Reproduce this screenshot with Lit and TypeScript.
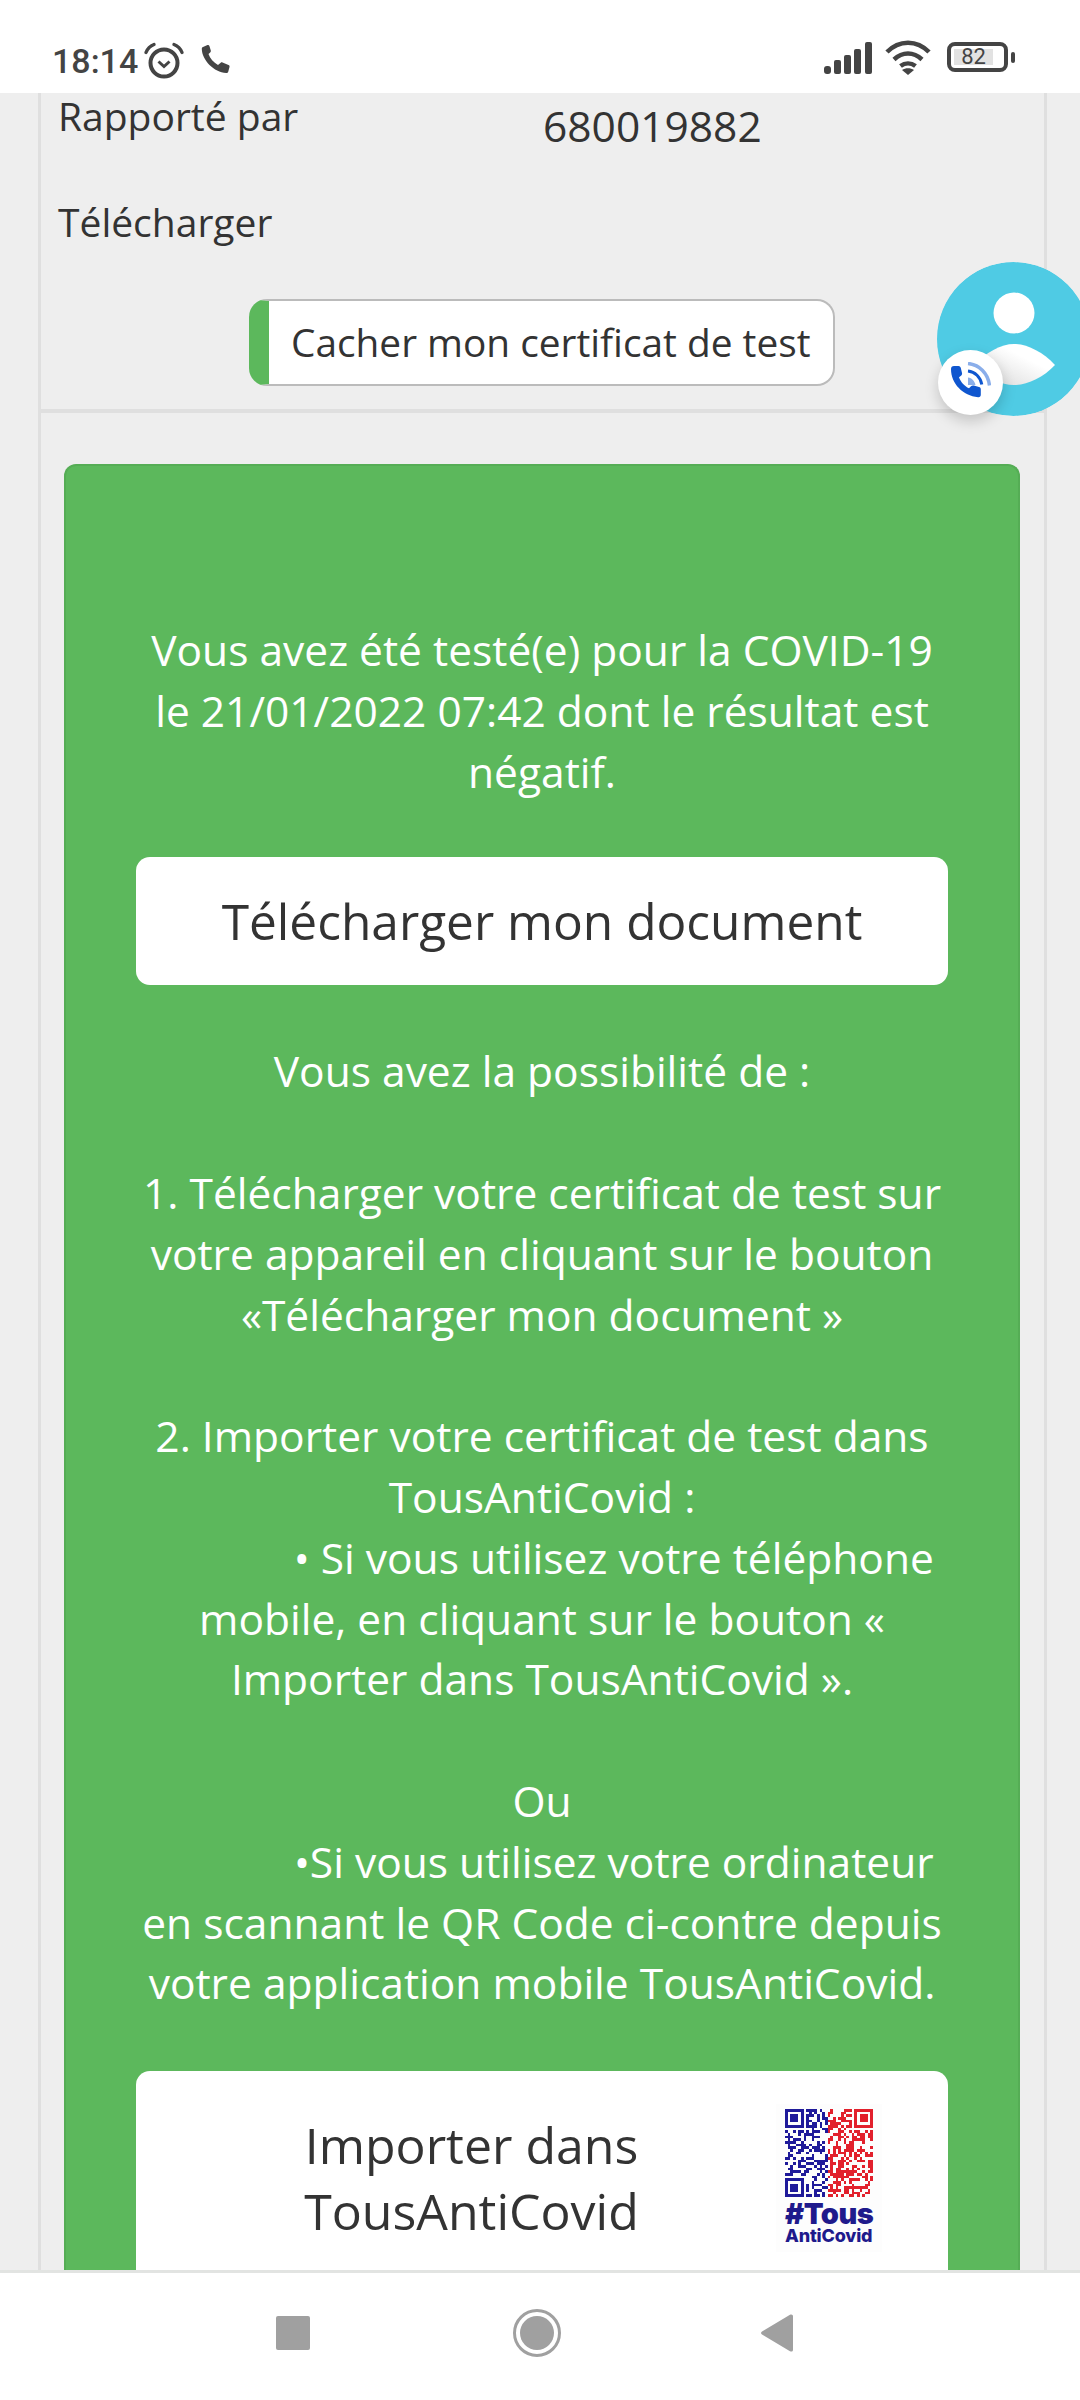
import { LitElement, css, html, svg } from 'lit';
import { customElement } from 'lit/decorators.js';

const sp = (n: number) => '\u00a0'.repeat(n);

const INTRO = [
	'Vous avez été testé(e) pour la COVID-19',
	'le 21/01/2022 07:42 dont le résultat est',
	'négatif.',
];

const STEPS = [
	'Vous avez la possibilité de :',
	'',
	'1. Télécharger votre certificat de test sur',
	'votre appareil en cliquant sur le bouton',
	'«Télécharger mon document »',
	'',
	'2. Importer votre certificat de test dans',
	'TousAntiCovid :',
	sp(13) + '• Si vous utilisez votre téléphone',
	'mobile, en cliquant sur le bouton «',
	'Importer dans TousAntiCovid ».',
	'',
	'Ou',
	sp(13) + '•Si vous utilisez votre ordinateur',
	'en scannant le QR Code ci-contre depuis',
	'votre application mobile TousAntiCovid.',
];

// pseudo random modules, same picture every run
function qrModules() {
	const size = 33;
	const cells = [];
	let seed = 20220121;
	const inFinder = (x: number, y: number) =>
		(x < 8 && y < 8) || (x > size - 9 && y < 8) || (x < 8 && y > size - 9);
	for (let y = 0; y < size; y++) {
		for (let x = 0; x < size; x++) {
			seed = (seed * 1103515245 + 12345) & 0x7fffffff;
			if (inFinder(x, y)) continue;
			if ((seed >> 16) % 100 < 52) cells.push({ x, y });
		}
	}
	return cells;
}

function finder(x: number, y: number, color: string) {
	return svg`
		<rect x=${x + 0.5} y=${y + 0.5} width="6" height="6" fill="none" stroke=${color} stroke-width="1"></rect>
		<rect x=${x + 2} y=${y + 2} width="3" height="3" fill=${color}></rect>
	`;
}

const BLUE = '#1f1a9a';
const RED = '#e2202c';

@customElement('app-root')
export class AppRoot extends LitElement {
	static styles = css`
		:host {
			display: block;
			width: 1080px;
			height: 2400px;
			position: relative;
			overflow: hidden;
			background: #eeeeee;
			font-family: 'Open Sans', sans-serif;
			color: #333333;
		}
		.screen {
			display: flex;
			flex-direction: column;
			height: 2400px;
		}

		.status {
			height: 93px;
			flex: none;
			background: #ffffff;
			display: flex;
			align-items: flex-start;
			padding: 42px 65px 0 52px;
			box-sizing: border-box;
			color: #444444;
		}
		.time {
			font-family: Roboto, sans-serif;
			font-weight: 500;
			font-size: 34px;
			line-height: 36px;
			margin-top: 1px;
			margin-right: 5px;
		}
		.status svg {
			display: block;
			flex: none;
		}
		.phone {
			margin-left: 16px;
			margin-top: 2px;
		}
		.status-right {
			margin-left: auto;
			display: flex;
			gap: 13px;
		}
		.wifi {
			margin-top: -2px;
		}
		.battery {
			position: relative;
			width: 68px;
			height: 32px;
			margin-left: 3px;
		}
		.battery-num {
			position: absolute;
			left: 7px;
			top: 7px;
			width: 39px;
			height: 16px;
			background: #e2e2e2;
			font-family: Roboto, sans-serif;
			font-size: 22px;
			line-height: 16px;
			text-align: center;
		}

		.page {
			flex: 1;
			min-height: 0;
			overflow: hidden;
			padding: 0 33px 0 38px;
		}
		.panel {
			border-left: 3px solid #dfdfdf;
			border-right: 3px solid #dfdfdf;
			height: 100%;
			box-sizing: border-box;
			overflow: hidden;
			font-size: 39px;
			line-height: 46px;
		}
		.details {
			padding: 0 0 0 17px;
			height: 320px;
			box-sizing: border-box;
			border-bottom: 4px solid #dfdfdf;
		}
		.row {
			display: flex;
			height: 106px;
		}
		.label {
			width: 485px;
			flex: none;
		}
		.value {
			padding-top: 10px;
			font-size: 42.5px;
		}
		.toggle-wrap {
			display: flex;
			padding-left: 191px;
			margin-top: -6px;
		}
		.toggle {
			box-sizing: border-box;
			height: 87px;
			width: 586px;
			background: #ffffff;
			border: 2px solid #bbbbbb;
			border-left: 20px solid #5cb85c;
			border-radius: 18px;
			padding-left: 22px;
			font-size: 38.8px;
			line-height: 83px;
			white-space: nowrap;
		}

		.result {
			margin: 51px 24px 0 23px;
			padding: 154px 70px 80px;
			background: #5cb85c;
			border: 2px solid #55ad55;
			border-bottom: none;
			border-radius: 12px;
			color: #ffffff;
			text-align: center;
			font-size: 42.5px;
			line-height: 60.8px;
			white-space: nowrap;
		}
		.line {
			height: 60.8px;
		}
		.download {
			margin: 55px 0 56px;
			height: 128px;
			background: #ffffff;
			border-radius: 14px;
			color: #333333;
			font-size: 49.6px;
			line-height: 128px;
		}
		.import {
			margin-top: 57px;
			height: 260px;
			background: #ffffff;
			border-radius: 14px;
			color: #333333;
			display: flex;
			padding: 33px 0 0 103px;
			box-sizing: border-box;
		}
		.import-text {
			width: 465px;
			flex: none;
			padding-top: 8px;
			font-size: 50px;
			line-height: 66px;
		}
		.qr {
			flex: none;
			margin-left: 72px;
			width: 106px;
			height: 148px;
			background: #fdfdfd;
			text-align: left;
		}
		.qr svg {
			display: block;
			margin: 5px 0 0 9px;
			filter: blur(0.5px);
		}
		.tag {
			margin-left: 9px;
			margin-top: 4px;
			color: #1f1a8c;
			font-family: Inter, sans-serif;
			font-weight: 900;
			font-size: 29px;
			line-height: 26px;
			letter-spacing: -0.5px;
		}
		.tag-sub {
			margin-left: 9px;
			color: #1f1a8c;
			font-family: Inter, sans-serif;
			font-weight: 800;
			font-size: 18px;
			line-height: 17px;
			letter-spacing: -0.2px;
		}

		.nav {
			flex: none;
			height: 130px;
			box-sizing: border-box;
			background: #ffffff;
			border-top: 3px solid #e2e4e2;
			display: flex;
			align-items: center;
			padding-left: 276px;
			padding-bottom: 8px;
		}
		.nav svg {
			display: block;
			flex: none;
		}
		.nav-circle {
			margin: 0 200px 0 203px;
		}

		.float {
			position: absolute;
			left: 937px;
			top: 262px;
			width: 153px;
			height: 154px;
		}
		.float-main {
			display: block;
			border-radius: 50%;
		}
		.float-call {
			position: absolute;
			left: 1px;
			top: 88px;
			width: 65px;
			height: 65px;
			border-radius: 50%;
			background: #ffffff;
			box-shadow: 0 6px 14px rgba(0, 0, 0, 0.18);
			display: flex;
			align-items: center;
			justify-content: center;
		}
	`;

	renderQr() {
		return html`
			<svg width="88" height="88" viewBox="0 0 33 33" shape-rendering="crispEdges">
				${qrModules().map(
					(c) => svg`<rect x=${c.x} y=${c.y} width="1" height="1" fill=${c.x < 16 ? BLUE : RED}></rect>`
				)}
				${finder(0, 0, BLUE)}
				${finder(26, 0, RED)}
				${finder(0, 26, BLUE)}
			</svg>
		`;
	}

	render() {
		return html`
			<div class="screen">
				<div class="status">
					<span class="time">18:14</span>
					<svg width="42" height="38" viewBox="0 0 42 38" fill="none" stroke="currentColor">
						<circle cx="21" cy="21" r="13.5" stroke-width="4"></circle>
						<path d="M15.5 19.5l5.5 5 5.5-5" stroke-width="3"></path>
						<path d="M3 10.5C4.5 6.5 7 4 11 2.5M39 10.5C37.5 6.5 35 4 31 2.5" stroke-width="3.4" stroke-linecap="round"></path>
					</svg>
					<svg class="phone" width="30" height="30" viewBox="0 0 30 30">
						<path fill="currentColor" d="M2 3L6.500 1c1-.3 1.600.2 1.900 1l1.400 4.600c.2.800 0 1.300-.6 1.800L7.500 10c1.500 4.500 5 8.500 9.500 11l2.700-2.300c.5-.4 1.200-.5 1.800-.2l6 2.500c.9.400 1.200 1.200 1 2l-1.200 4.500c-.3 1-1 1.500-2.100 1.500C13 28.500 1 16 .8 5c0-1 .3-1.600 1.200-2z"></path>
					</svg>
					<div class="status-right">
						<svg width="48" height="32" viewBox="0 0 48 32" fill="currentColor">
							<rect x="0" y="24" width="7" height="8" rx="3"></rect>
							<rect x="10" y="18" width="7" height="14" rx="2"></rect>
							<rect x="20" y="13" width="7" height="19" rx="2"></rect>
							<rect x="30" y="7" width="7" height="25" rx="2"></rect>
							<rect x="41" y="0" width="7" height="32" rx="2"></rect>
						</svg>
						<svg class="wifi" width="46" height="35" viewBox="0 0 46 35" fill="none" stroke="currentColor" stroke-width="4.5">
							<path d="M2 12C14-.5 32-.5 44 12"></path>
							<path d="M9 19.500c8.500-8 19.500-8 28 0"></path>
							<path d="M15.500 26c4.500-3.500 10.500-3.500 15 0"></path>
							<path fill="currentColor" stroke="none" d="M23 35l-6-5c3.500-2.500 8.500-2.500 12 0z"></path>
						</svg>
						<div class="battery">
							<svg width="68" height="32" viewBox="0 0 68 32" fill="none">
								<rect x="2" y="2" width="57" height="26" rx="6" stroke="currentColor" stroke-width="4"></rect>
								<rect x="64" y="10" width="4" height="11" rx="2" fill="currentColor"></rect>
							</svg>
							<span class="battery-num">82</span>
						</div>
					</div>
				</div>

				<div class="page">
					<div class="panel">
						<div class="details">
							<div class="row">
								<span class="label">Rapporté par</span>
								<span class="value">680019882</span>
							</div>
							<div class="row">
								<span class="label">Télécharger</span>
							</div>
							<div class="toggle-wrap">
								<div class="toggle">Cacher mon certificat de test</div>
							</div>
						</div>

						<div class="result">
							${INTRO.map((l) => html`<div class="line">${l}</div>`)}
							<div class="download">Télécharger mon document</div>
							${STEPS.map((l) => html`<div class="line">${l}</div>`)}
							<div class="import">
								<div class="import-text">Importer dans<br />TousAntiCovid</div>
								<div class="qr">
									${this.renderQr()}
									<div class="tag">#Tous</div>
									<div class="tag-sub">AntiCovid</div>
								</div>
							</div>
						</div>
					</div>
				</div>

				<div class="nav">
					<svg width="34" height="34" viewBox="0 0 34 34"><rect width="34" height="34" rx="2" fill="#a0a0a0"></rect></svg>
					<svg class="nav-circle" width="48" height="48" viewBox="0 0 48 48">
						<circle cx="24" cy="24" r="22.500" fill="none" stroke="#a0a0a0" stroke-width="3"></circle>
						<circle cx="24" cy="24" r="17" fill="#a0a0a0"></circle>
					</svg>
					<svg width="32" height="38" viewBox="0 0 32 38"><path d="M29 .8c1.500-.9 3-.2 3 1.500v33.400c0 1.700-1.500 2.400-3 1.500L1 20.500c-1.300-.8-1.300-2.200 0-3z" fill="#a0a0a0"></path></svg>
				</div>
			</div>

			<div class="float">
				<svg class="float-main" width="153" height="154" viewBox="0 0 153 154">
					<defs>
						<linearGradient id="body" x1="0" y1="1" x2="1" y2="0">
							<stop offset="0.2" stop-color="#e2e2e2"></stop>
							<stop offset="0.65" stop-color="#ffffff"></stop>
						</linearGradient>
					</defs>
					<circle cx="76.500" cy="77" r="77" fill="#4fcbe4"></circle>
					<circle cx="77" cy="51" r="20.500" fill="#ffffff"></circle>
					<path d="M36 103C50 90 64 82 77 82S106 90 118 103C106 116 90 123 77 123S50 116 36 103z" fill="url(#body)"></path>
				</svg>
				<div class="float-call">
					<svg width="40" height="42" viewBox="0 0 40 42">
						<path fill="#0f56cf" d="M0 7c0-2 1-3 3-3h4.500c1.500 0 2 1 2.300 2l1.200 5c.3 1.200-.2 2-1 2.800l-2 1.500c1.500 4.500 5.500 9 10 11l2-2c.8-.8 1.700-1 2.800-.7l5.200 1.500c1.200.4 1.800 1 1.800 2.200v5.500c0 1.700-1 2.700-2.700 2.500C12 33.500 0 22 0 7z"></path>
						<path fill="none" stroke="#8aaeea" stroke-width="3.500" d="M17 1.500c11 1 20 9.500 21.500 22"></path>
						<path fill="none" stroke="#0f56cf" stroke-width="3" d="M17 9c7 .8 12.500 6 13.800 13.500"></path>
						<path fill="#8aaeea" d="M17 15.500c4 .5 6.500 3.500 7.500 7.500h-7.500z"></path>
					</svg>
				</div>
			</div>
		`;
	}
}

declare global {
	interface HTMLElementTagNameMap {
		'app-root': AppRoot;
	}
}
